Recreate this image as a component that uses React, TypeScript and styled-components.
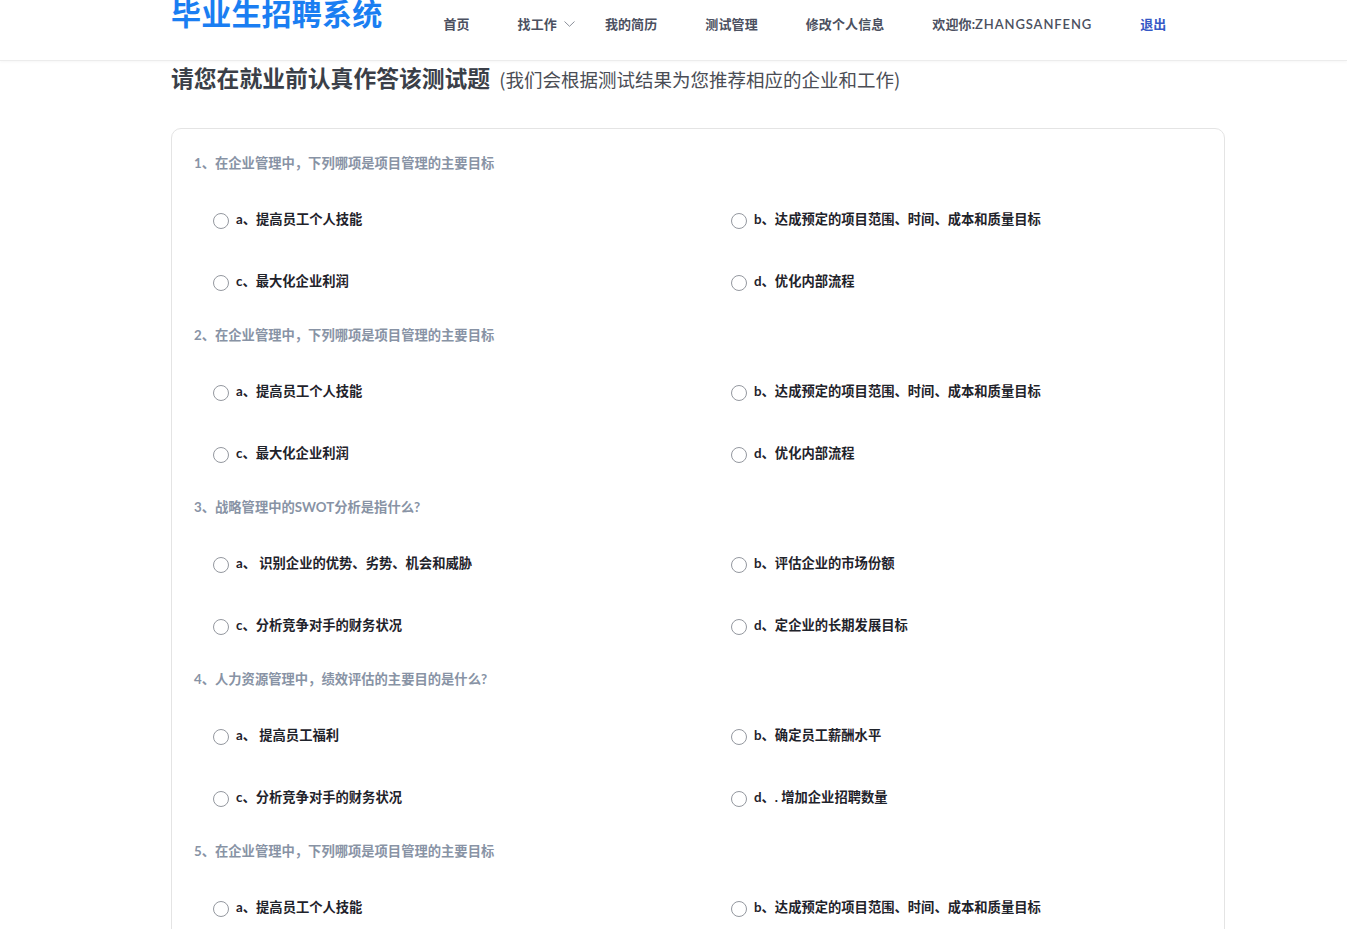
import React from "react";
import styled, { createGlobalStyle } from "styled-components";

const GlobalStyle = createGlobalStyle`
  html, body { margin: 0; padding: 0; background: #fff; }
  body { font-family: Lato, "Noto Sans CJK SC", sans-serif; overflow: hidden; }
  * { box-sizing: border-box; }
`;

const Header = styled.header`
  height: 61px;
  border-bottom: 1px solid #ececec;
  box-shadow: 0 1px 3px rgba(0, 0, 0, 0.04);
`;

const HeaderInner = styled.div`
  display: flex;
  align-items: center;
  height: 47px;
  margin-left: 171px;
`;

const Logo = styled.div`
  align-self: flex-start;
  margin-top: -3px;
  font-size: 30px;
  line-height: 30px;
  font-weight: 700;
  color: #1a7ef2;
  font-family: "Noto Sans CJK SC", sans-serif;
  letter-spacing: 0.2px;
`;

const Nav = styled.nav`
  display: flex;
  align-items: center;
  gap: 48px;
  margin-left: 61px;
`;

const NavItem = styled.a<{ $accent?: boolean; $dropdown?: boolean }>`
  display: flex;
  align-items: center;
  font-size: 13px;
  font-weight: 700;
  letter-spacing: 0.1px;
  color: ${(p) => (p.$accent ? "#3558c6" : "#4b5060")};
  text-decoration: none;
  white-space: nowrap;
  margin-right: ${(p) => (p.$dropdown ? "-18px" : "0")};
`;

const UserName = styled.span`
  letter-spacing: 0.9px;
  font-weight: 600;
`;

const Chevron = styled.svg`
  width: 11px;
  height: 6px;
  margin-left: 7px;
`;

const Container = styled.main`
  width: 1054px;
  margin-left: 171px;
`;

const TitleRow = styled.div`
  display: flex;
  align-items: baseline;
  gap: 9px;
  margin-top: 2px;
  height: 30px;
`;

const Title = styled.h1`
  margin: 0;
  font-size: 22.8px;
  line-height: 30px;
  font-weight: 700;
  color: #3b3f48;
  font-family: "Noto Sans CJK SC", sans-serif;
`;

const SubTitle = styled.span`
  font-size: 18.5px;
  color: #4a4d55;
  font-family: "Noto Sans CJK SC", sans-serif;
  font-weight: 400;
`;

const Card = styled.section`
  margin-top: 35px;
  border: 1px solid #e4e4e4;
  border-radius: 10px;
  padding: 24px 22px 40px;
`;

const Question = styled.div`
  padding-bottom: 13px;
`;

const QuestionTitle = styled.div`
  font-size: 13.3px;
  line-height: 20px;
  font-weight: 700;
  color: #8893a5;
  margin-bottom: 15px;
`;

const Options = styled.div`
  display: grid;
  grid-template-columns: 518px 1fr;
  padding-left: 19px;
`;

const Option = styled.label`
  display: flex;
  align-items: center;
  gap: 7px;
  height: 62px;
  padding-bottom: 2px;
  font-size: 13.3px;
  font-weight: 700;
  color: #1f232b;
  cursor: pointer;
`;

const Radio = styled.input.attrs({ type: "radio" })`
  appearance: none;
  -webkit-appearance: none;
  margin: 5px 0 0 0;
  width: 16px;
  height: 16px;
  border: 1px solid #94989f;
  border-radius: 50%;
  background: #fff;
  flex: none;
`;

const questions = [
  {
    title: "1、在企业管理中，下列哪项是项目管理的主要目标",
    options: ["a、提高员工个人技能", "b、达成预定的项目范围、时间、成本和质量目标", "c、最大化企业利润", "d、优化内部流程"],
  },
  {
    title: "2、在企业管理中，下列哪项是项目管理的主要目标",
    options: ["a、提高员工个人技能", "b、达成预定的项目范围、时间、成本和质量目标", "c、最大化企业利润", "d、优化内部流程"],
  },
  {
    title: "3、战略管理中的SWOT分析是指什么?",
    options: ["a、 识别企业的优势、劣势、机会和威胁", "b、评估企业的市场份额", "c、分析竞争对手的财务状况", "d、定企业的长期发展目标"],
  },
  {
    title: "4、人力资源管理中，绩效评估的主要目的是什么?",
    options: ["a、 提高员工福利", "b、确定员工薪酬水平", "c、分析竞争对手的财务状况", "d、. 增加企业招聘数量"],
  },
  {
    title: "5、在企业管理中，下列哪项是项目管理的主要目标",
    options: ["a、提高员工个人技能", "b、达成预定的项目范围、时间、成本和质量目标", "c、最大化企业利润", "d、优化内部流程"],
  },
];

export default function App() {
  return (
    <>
      <GlobalStyle />
      <Header>
        <HeaderInner>
          <Logo>毕业生招聘系统</Logo>
          <Nav>
            <NavItem>首页</NavItem>
            <NavItem $dropdown>
              找工作
              <Chevron viewBox="0 0 11 6" fill="none">
                <path d="M0.5 0.5 L5.5 5.3 L10.5 0.5" stroke="#8a8f99" strokeWidth="1" />
              </Chevron>
            </NavItem>
            <NavItem>我的简历</NavItem>
            <NavItem>测试管理</NavItem>
            <NavItem>修改个人信息</NavItem>
            <NavItem>
              <span>欢迎你:</span>
              <UserName>ZHANGSANFENG</UserName>
            </NavItem>
            <NavItem $accent>退出</NavItem>
          </Nav>
        </HeaderInner>
      </Header>
      <Container>
        <TitleRow>
          <Title>请您在就业前认真作答该测试题</Title>
          <SubTitle>(我们会根据测试结果为您推荐相应的企业和工作)</SubTitle>
        </TitleRow>
        <Card>
          {questions.map((q, qi) => (
            <Question key={qi}>
              <QuestionTitle>{q.title}</QuestionTitle>
              <Options>
                {q.options.map((o, oi) => (
                  <Option key={oi}>
                    <Radio name={`q${qi}`} />
                    <span>{o}</span>
                  </Option>
                ))}
              </Options>
            </Question>
          ))}
        </Card>
      </Container>
    </>
  );
}
